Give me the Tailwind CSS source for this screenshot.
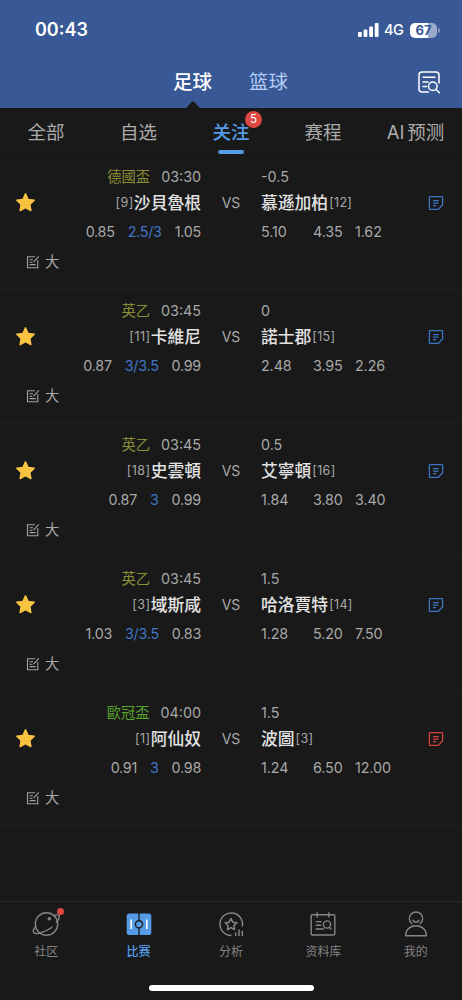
<!DOCTYPE html>
<html lang="zh">
<head>
<meta charset="utf-8">
<title>关注</title>
<script src="https://cdn.jsdelivr.net/npm/@tailwindcss/browser@4"></script>
</head>
<body class="bg-[#191919] font-['Inter','Noto_Sans_CJK_SC',sans-serif]">
<svg class="hidden">
  <symbol id="star" viewBox="0 0 20 20"><path d="M10 1.800l2.500 5.300 5.800.8-4.200 4 1 5.800L10 14.900l-5.100 2.800 1-5.800-4.200-4 5.800-.8z" fill="#f8c440" stroke="#f8c440" stroke-width="1.400" stroke-linejoin="round"/></symbol>
  <symbol id="note" viewBox="0 0 16 16"><path d="M2 1.600h12q.6 0 .6.6v7.600l-4.300 4.600H2q-.6 0-.6-.6V2.200q0-.6.6-.6zM5 5.600h5.800M5 8.100h5.400M5 10.600h3.100" fill="none" stroke="currentColor" stroke-width="1.300" stroke-linejoin="round"/></symbol>
  <symbol id="edit" viewBox="0 0 14 14"><path d="M9 1.700H1.500v11h10.300V5M3.500 4.800h3.500M3.500 7.200h3M3.500 9.600h6.200M7.600 7.200L12.800 1.300" fill="none" stroke="#a3a3a3" stroke-width="1.100"/></symbol>
</svg>
<div class="flex h-[1000px] w-[462px] flex-col overflow-hidden">
  <header class="h-[108px] bg-[#385995] text-white">
    <div class="flex h-[60px] items-center justify-between pl-[35px] pr-[22px]">
      <span class="text-[18px] font-semibold leading-none">00:43</span>
      <div class="flex items-center">
        <svg class="h-[14px] w-[21px]" viewBox="0 0 21 14" fill="#fff"><rect y="9" width="3.800" height="5" rx="1"/><rect x="5.600" y="6.500" width="3.800" height="7.500" rx="1"/><rect x="11.200" y="3.500" width="3.800" height="10.500" rx="1"/><rect x="16.800" y="0" width="3.800" height="14" rx="1"/></svg>
        <span class="ml-[5px] w-[21px] text-[14.500px] font-medium leading-none tracking-[-0.5px]">4G</span>
        <span class="ml-[5px] flex h-[15px] w-[27px] items-center justify-center rounded-[5px] bg-linear-to-r from-white from-68% to-[#9baaca] to-68% text-[13px] font-bold leading-none text-[#385995]">67</span>
        <span class="ml-px h-[5px] w-[2px] rounded-r-full bg-[#8798bf]"></span>
      </div>
    </div>
    <div class="flex h-[48px] pl-[173px] pr-[21px]">
      <div class="relative w-[39px] pt-[8px] text-[19.500px] font-medium leading-[28px] whitespace-nowrap">足球<svg class="absolute bottom-0 left-[13px] h-[7px] w-[14px]" viewBox="0 0 14 7"><path d="M0 7L6 .8q1-1 2 0L14 7z" fill="#191919"/></svg></div>
      <div class="ml-[37px] pt-[8px] text-[19.500px] leading-[28px] text-[#b5cdf5]">篮球</div>
      <svg class="ml-auto mt-[10px] h-[24px] w-[24px]" viewBox="0 0 24 24" fill="none" stroke="#fff" stroke-width="1.500" stroke-linecap="round"><path d="M11.500 22H5q-3 0-3-3V5q0-3 3-3h14q3 0 3 3v8M6 7.200h12M6 12h5M6 16.500h3.500"/><circle cx="15.800" cy="16.300" r="4.300"/><path d="M19 19.500L22.500 22.700"/></svg>
    </div>
  </header>
  <nav class="flex h-[48px] border-b border-[#151515] text-[18.500px] text-[#ababab]">
    <div class="w-[92px] pt-[10px] text-center leading-[28px]">全部</div>
    <div class="w-[93px] pt-[10px] text-center leading-[28px]">自选</div>
    <div class="relative w-[92px] pt-[10px] text-center font-medium leading-[28px] text-[#559be6]">关注
      <span class="absolute left-[60px] top-[3px] flex size-[17px] items-center justify-center rounded-full bg-[#dc4942] text-[11.500px] font-normal leading-none text-white">5</span>
      <span class="absolute left-[33px] top-[42px] h-[4px] w-[26px] rounded-full bg-[#559be6]"></span>
    </div>
    <div class="w-[92px] pt-[10px] text-center leading-[28px]">赛程</div>
    <div class="w-[93px] pt-[10px] text-center leading-[28px]">AI<span class="ml-[3px]">预测</span></div>
  </nav>
  <main id="matches" class="-mt-px flex-1 font-['Inter','Noto_Sans_CJK_TC',sans-serif]"></main>
  <footer class="h-[99px] border-t border-[#2b2b2b] text-[12px] text-[#858585]">
    <div class="grid h-[84px] grid-cols-5 pt-[8px]">
      <div class="flex flex-col items-center">
        <div class="relative size-[28px]">
          <svg class="size-[28px]" viewBox="0 0 28 28" fill="none" stroke="currentColor" stroke-width="1.400" stroke-linecap="round"><circle cx="14.500" cy="14" r="11.200"/><path d="M21.500 5.500c3-1 5.500-.8 5.800.5.300 1.500-1 4-2.800 6.300M3.600 16.400c-2 2.400-2.900 4.600-1.900 6.100 2 2.800 11.900-.6 18.300-5.300"/><circle cx="17.300" cy="8.700" r="1.100" fill="currentColor"/></svg>
          <span class="absolute left-[25px] top-[-2px] size-[7px] rounded-full bg-[#dc4942]"></span>
        </div>
        <span class="mt-[5px] leading-[18px]">社区</span>
      </div>
      <div class="flex flex-col items-center text-[#559be6]">
        <svg class="size-[28px]" viewBox="0 0 28 28"><rect x="1.700" y="3.500" width="24.600" height="21.500" rx="2.500" fill="#559be6"/><path d="M14 3v22.500" stroke="#191919" stroke-width="1.300"/><circle cx="14" cy="14.300" r="3.600" fill="#559be6" stroke="#191919" stroke-width="1.400"/><path d="M6.200 9.500v9.500M21.800 9.500v9.500" stroke="#fff" stroke-width="1.600"/></svg>
        <span class="mt-[5px] font-medium leading-[18px]">比赛</span>
      </div>
      <div class="flex flex-col items-center">
        <svg class="size-[28px]" viewBox="0 0 28 28" fill="none" stroke="currentColor" stroke-width="1.500"><path d="M14.500 25.500A11.300 11.300 0 1 1 25.300 16.500"/><path d="M14 8.500l1.800 3.700 4 .6-2.900 2.800.7 4-3.600-1.900-3.600 1.900.7-4-2.900-2.800 4-.6z" stroke-linejoin="round"/><path d="M18.700 22.500v3.500M22 19.500V26M25.300 20.700V26"/></svg>
        <span class="mt-[5px] leading-[18px]">分析</span>
      </div>
      <div class="flex flex-col items-center">
        <svg class="size-[28px]" viewBox="0 0 28 28" fill="none" stroke="currentColor" stroke-width="1.400"><rect x="2.200" y="4.700" width="23.600" height="20.300" rx="1.200"/><path d="M8.200 2.200v5.300M19.800 2.200v5.300M6.700 11.600h6M6.700 15.300h5.500M6.700 19h8.300M20.300 17.300l2 2.300"/><circle cx="18" cy="14.500" r="3.600"/></svg>
        <span class="mt-[5px] leading-[18px]">资料库</span>
      </div>
      <div class="flex flex-col items-center">
        <svg class="size-[28px]" viewBox="0 0 28 28" fill="none" stroke="currentColor" stroke-width="1.400" stroke-linecap="round" stroke-linejoin="round"><path d="M10 13.800a6.600 6.600 0 1 1 8 0M11 10.300q3 3.800 6 0M3.600 25.700c0-6 4.500-10 10.400-10s10.400 4 10.400 10z"/></svg>
        <span class="mt-[5px] leading-[18px]">我的</span>
      </div>
    </div>
    <div class="mx-auto -mt-px h-[6px] w-[165px] rounded-full bg-white"></div>
  </footer>
</div>
<script>
const matches = [
  ['德國盃','03:30','9','沙貝魯根','-0.5','慕遜加柏','12',['0.85','2.5/3','1.05'],['5.10','4.35','1.62']],
  ['英乙','03:45','11','卡維尼','0','諾士郡','15',['0.87','3/3.5','0.99'],['2.48','3.95','2.26']],
  ['英乙','03:45','18','史雲頓','0.5','艾寧頓','16',['0.87','3','0.99'],['1.84','3.80','3.40']],
  ['英乙','03:45','3','域斯咸','1.5','哈洛賈特','14',['1.03','3/3.5','0.83'],['1.28','5.20','7.50']],
  ['歐冠盃','04:00','1','阿仙奴','1.5','波圖','3',['0.91','3','0.98'],['1.24','6.50','12.00']]
];
document.getElementById('matches').innerHTML = matches.map(([league,time,rankA,home,line,away,rankB,l,r]) => `
<section class="grid h-[134px] grid-cols-[51px_150px_60px_158px_43px] grid-rows-[22px_29px_29px_32px] items-center border-b border-[#1f1f1f] pt-[11px] text-[14.300px] leading-none text-[#a8a8a8] whitespace-nowrap">
  <div class="col-start-2 flex justify-end gap-[11px]"><span class="${league === '歐冠盃' ? 'text-[#5aa62c]' : 'text-[#8a8d35]'}">${league}</span><span>${time}</span></div>
  <div class="col-start-4">${line}</div>
  <div class="col-start-1 row-start-2 pl-[15px]"><svg class="size-[21px]"><use href="#star"/></svg></div>
  <div class="col-start-2 row-start-2 flex items-center justify-end pt-px"><span class="text-[12.500px] tracking-[0.5px]">[${rankA}]</span><span class="text-[16.800px] font-medium text-[#e2e2e2]">${home}</span></div>
  <div class="col-start-3 row-start-2 text-center text-[14px]">VS</div>
  <div class="col-start-4 row-start-2 flex items-center pt-px"><span class="text-[16.800px] font-medium text-[#e2e2e2]">${away}</span><span class="ml-px text-[12.500px] tracking-[0.300px]">[${rankB}]</span></div>
  <div class="col-start-5 row-start-2 pl-[9px] ${league === '歐冠盃' ? 'text-[#d3423c]' : 'text-[#3d75c4]'}"><svg class="size-[16px]"><use href="#note"/></svg></div>
  <div class="col-start-1 col-end-3 row-start-3 flex justify-end gap-[13px] pt-px tracking-[-0.25px]"><span>${l[0]}</span><span class="text-[#4076c6]">${l[1]}</span><span>${l[2]}</span></div>
  <div class="col-start-4 row-start-3 grid grid-cols-[52px_42px_1fr] pt-px tracking-[-0.1px]"><span>${r[0]}</span><span>${r[1]}</span><span>${r[2]}</span></div>
  <div class="col-start-1 col-end-3 row-start-4 flex items-center gap-[5px] pl-[26px] pt-px"><svg class="size-[14px]"><use href="#edit"/></svg><span>大</span></div>
</section>`).join('');
</script>
</body>
</html>
